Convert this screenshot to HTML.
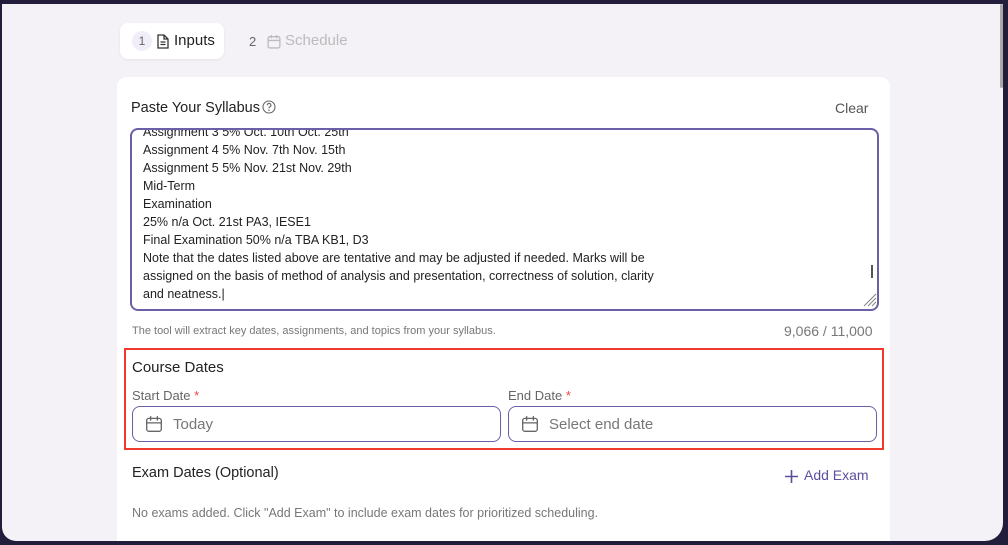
<!DOCTYPE html>
<html><head><meta charset="utf-8"><style>
*{box-sizing:border-box;margin:0;padding:0}
svg{display:block}
body{width:1008px;height:545px;background:#221d3a;overflow:hidden;font-family:"Liberation Sans",sans-serif;position:relative}
.page{position:absolute;left:2px;top:4px;width:1001px;height:537px;background:#f4f2f7;border-radius:0 0 18px 14px;overflow:hidden}
.sb{position:absolute;left:998px;top:0;width:3px;height:84px;background:#aaa;border-radius:2px}
.tab1{position:absolute;left:118px;top:19px;width:104px;height:36px;background:#fff;border-radius:8px;box-shadow:0 1px 3px rgba(0,0,0,.06)}
.num{position:absolute;width:20px;height:20px;border-radius:50%;background:#f1eefa;font-size:12px;color:#666;text-align:center;line-height:20px}
.card{position:absolute;left:115px;top:73px;width:773px;height:480px;background:#fff;border-radius:10px}
.t{position:absolute;white-space:nowrap}
.ta{position:absolute;left:13px;top:51px;width:749px;height:183px;border:2px solid #6c5fa8;border-radius:8px;overflow:hidden}
.ta div{position:absolute;left:11px;font-size:12.5px;color:#222;line-height:18px}
.inp{position:absolute;top:329px;height:36px;border:1px solid #6c5fa8;border-radius:8px}
.red{position:absolute;left:7px;top:271px;width:760px;height:102px;border:2px solid #f03a2e}
</style></head><body>
<div class="page">
<div class="sb"></div>
<div class="tab1"></div>
<div class="num" style="left:130px;top:27px">1</div>
<svg style="position:absolute;left:155px;top:30px" width="12" height="15" viewBox="0 0 12 15" fill="none" stroke="#333" stroke-width="1.3"><path d="M1 1h6l4 4v9H1z M7 1v4h4 M3.5 8h5 M3.5 10.5h5"/></svg>
<div class="t" style="left:172px;top:28px;font-size:15px;color:#222">Inputs</div>
<div class="t" style="left:247px;top:30px;font-size:13px;color:#666">2</div>
<svg style="position:absolute;left:265px;top:30px" width="14" height="15" viewBox="0 0 13 14" fill="none" stroke="#bbb" stroke-width="1.2"><rect x="1" y="2.5" width="11" height="10.5" rx="1.5"/><path d="M1 6h11M4 1v3M9 1v3"/></svg>
<div class="t" style="left:283px;top:28px;font-size:15px;color:#bbb">Schedule</div>
<div class="card">
<div class="t" style="left:14px;top:23px;font-size:14.5px;color:#222">Paste Your Syllabus</div>
<svg style="position:absolute;left:145px;top:23px" width="14" height="14" viewBox="0 0 14 14" fill="none" stroke="#666" stroke-width="1.1"><circle cx="7" cy="7" r="6"/><path d="M5.3 5.3a1.8 1.8 0 1 1 2.4 1.6c-.5.2-.7.5-.7 1v.5"/><circle cx="7" cy="10.3" r=".3" fill="#666"/></svg>
<div class="t" style="left:718px;top:23px;font-size:14px;color:#555">Clear</div>
<div class="ta">
<div style="top:-7px">Assignment 3 5% Oct. 10th Oct. 25th</div>
<div style="top:11px">Assignment 4 5% Nov. 7th Nov. 15th</div>
<div style="top:29px">Assignment 5 5% Nov. 21st Nov. 29th</div>
<div style="top:47px">Mid-Term</div>
<div style="top:65px">Examination</div>
<div style="top:83px">25% n/a Oct. 21st PA3, IESE1</div>
<div style="top:101px">Final Examination 50% n/a TBA KB1, D3</div>
<div style="top:119px">Note that the dates listed above are tentative and may be adjusted if needed. Marks will be</div>
<div style="top:137px">assigned on the basis of method of analysis and presentation, correctness of solution, clarity</div>
<div style="top:155px">and neatness.|</div>
<span style="position:absolute;left:739px;top:135px;width:2px;height:13px;background:#555"></span>
<svg style="position:absolute;left:730px;top:162px" width="15" height="15" stroke="#888" stroke-width="1.1"><path d="M14 2L2 14M14 6L6 14M14 10L10 14"/></svg>
</div>
<div class="t" style="left:15px;top:248px;font-size:11px;color:#777">The tool will extract key dates, assignments, and topics from your syllabus.</div>
<div class="t" style="left:667px;top:246px;font-size:14px;color:#777">9,066 / 11,000</div>
<div class="red"></div>
<div class="t" style="left:15px;top:282px;font-size:15px;color:#222">Course Dates</div>
<div class="t" style="left:15px;top:311px;font-size:13px;color:#666">Start Date <span style="color:#e44">*</span></div>
<div class="t" style="left:391px;top:311px;font-size:13px;color:#666">End Date <span style="color:#e44">*</span></div>
<div class="inp" style="left:15px;width:369px"></div>
<div class="inp" style="left:391px;width:369px"></div>
<svg style="position:absolute;left:28px;top:338px" width="18" height="18" viewBox="0 0 16 16" fill="none" stroke="#666" stroke-width="1.2"><rect x="1.5" y="3" width="13" height="11.5" rx="2"/><path d="M1.5 7h13M5 1v4M11 1v4"/></svg>
<svg style="position:absolute;left:404px;top:338px" width="18" height="18" viewBox="0 0 16 16" fill="none" stroke="#666" stroke-width="1.2"><rect x="1.5" y="3" width="13" height="11.5" rx="2"/><path d="M1.5 7h13M5 1v4M11 1v4"/></svg>
<div class="t" style="left:56px;top:339px;font-size:15px;color:#777">Today</div>
<div class="t" style="left:432px;top:339px;font-size:15px;color:#777">Select end date</div>
<div class="t" style="left:15px;top:388px;font-size:14.5px;color:#222">Exam Dates (Optional)</div>
<svg style="position:absolute;left:668px;top:393px" width="13" height="13" stroke="#5b4fa0" stroke-width="1.6"><path d="M6.5 0v13M0 6.5h13"/></svg>
<div class="t" style="left:687px;top:390px;font-size:14px;color:#5b4fa0">Add Exam</div>
<div class="t" style="left:15px;top:429px;font-size:12.5px;color:#777">No exams added. Click "Add Exam" to include exam dates for prioritized scheduling.</div>
</div>
</div>
</body></html>
